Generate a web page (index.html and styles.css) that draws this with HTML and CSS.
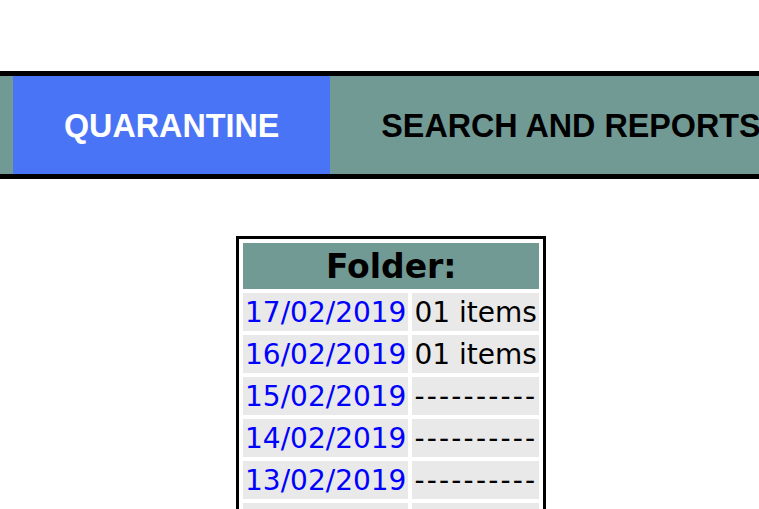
FILE: index.html
```html
<!DOCTYPE html>
<html lang="en">
<head>
    <meta charset="UTF-8">
    <title>Quarantine</title>
    <link rel="stylesheet" href="styles.css">
</head>
<body>
    <div class="menu">
        <a class="menu-item active" href="#">QUARANTINE</a>
        <a class="menu-item" href="#">SEARCH AND REPORTS</a>
        <a class="menu-item" href="#">SETTINGS</a>
    </div>
    <div class="content">
        <table class="folders">
            <tr>
                <th colspan="2">Folder:</th>
            </tr>
            <tr>
                <td><a href="#">17/02/2019</a></td>
                <td>01 items</td>
            </tr>
            <tr>
                <td><a href="#">16/02/2019</a></td>
                <td>01 items</td>
            </tr>
            <tr>
                <td><a href="#">15/02/2019</a></td>
                <td><span class="empty">----------</span></td>
            </tr>
            <tr>
                <td><a href="#">14/02/2019</a></td>
                <td><span class="empty">----------</span></td>
            </tr>
            <tr>
                <td><a href="#">13/02/2019</a></td>
                <td><span class="empty">----------</span></td>
            </tr>
            <tr>
                <td><a href="#">12/02/2019</a></td>
                <td><span class="empty">----------</span></td>
            </tr>
        </table>
    </div>
</body>
</html>
```

FILE: styles.css
```css
body {
    margin: 0;
    padding-top: 71px;
    font-family: "DejaVu Sans", Verdana, sans-serif;
    background: #ffffff;
    overflow: hidden;
}
.menu {
    display: flex;
    height: 98px;
    padding-left: 13px;
    background: #729a95;
    border-top: 5px solid #000;
    border-bottom: 5px solid #000;
    white-space: nowrap;
    overflow: hidden;
}
.menu-item {
    display: flex;
    align-items: center;
    padding: 2px 51px 0;
    font-family: "Liberation Sans", Arial, sans-serif;
    font-size: 32.3px;
    font-weight: bold;
    color: #000;
    text-decoration: none;
}
.menu-item.active {
    background: #4a74f6;
    color: #fff;
}
.content {
    padding: 57px 0 0 236px;
}
.folders {
    border: 3px solid #000;
    border-spacing: 4px;
}
.folders th {
    background: #729a95;
    font-size: 33px;
    padding: 4px 2px 3px;
}
.folders td {
    background: #e9e9e9;
    font-size: 28px;
    padding: 3px 2px 2px;
    text-align: left;
}
.folders a {
    color: #0000ff;
    text-decoration: none;
}
.empty {
    letter-spacing: 2.2px;
}
```
